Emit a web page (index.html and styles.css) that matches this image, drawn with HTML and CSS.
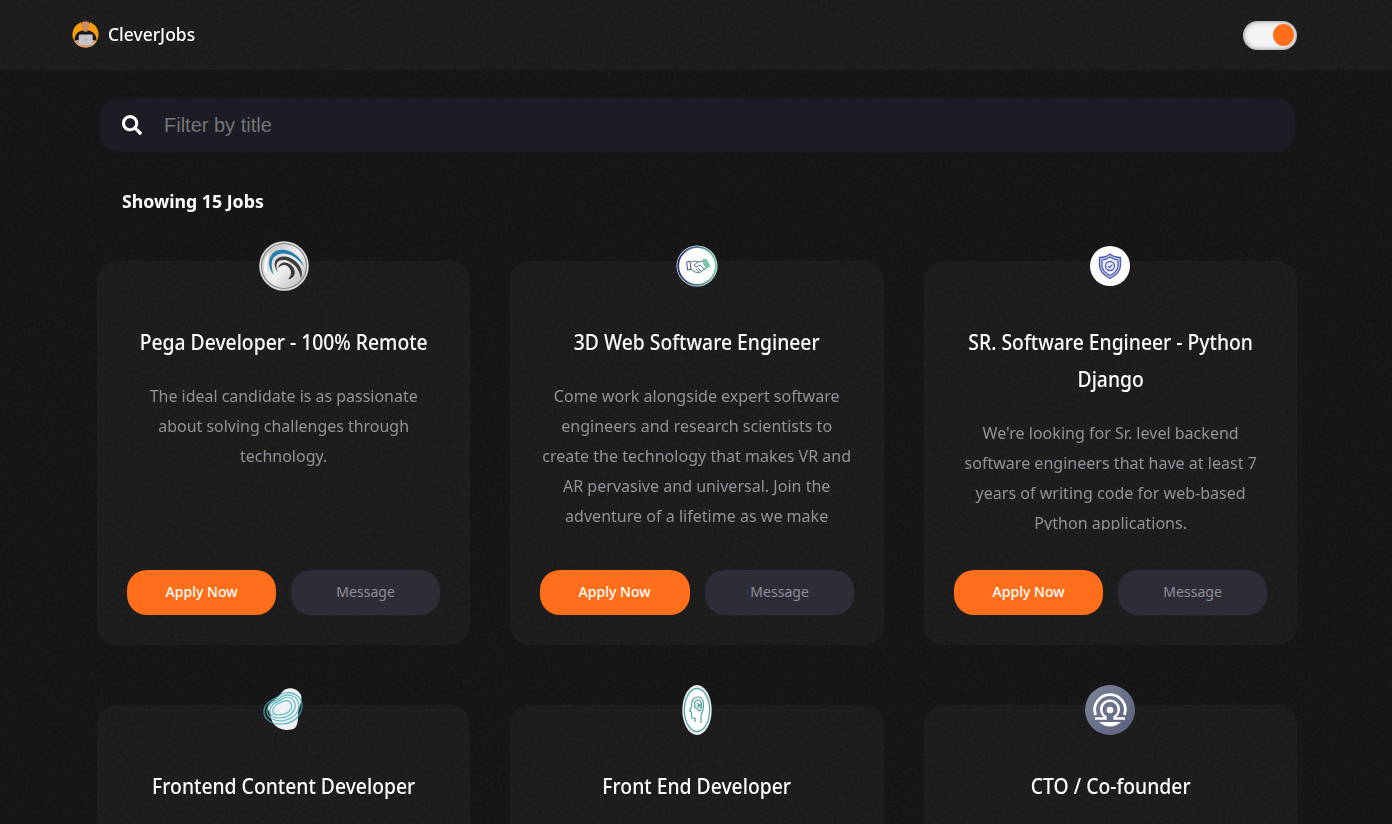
FILE: index.html
```
<!DOCTYPE html>
<html lang="en">
<head>
<meta charset="utf-8">
<title>CleverJobs</title>
<link rel="stylesheet" href="styles.css">
</head>
<body>
<header class="header">
  <div class="brand">
    <svg class="brand-logo" viewBox="0 0 28 31">
      <circle cx="14" cy="16.500" r="13.500" fill="#f99d0c"/>
      <path d="M2.500 23Q3 14.500 9 13L14 11.500L19 13Q25 14.500 25.500 23L22 26H6Z" fill="#16161b"/>
      <path d="M2 23L8 22V26H20V22L26 23Q22 30 14 30Q6 30 2 23Z" fill="#dc9c76"/>
      <path d="M11.500 9H16.500V13Q14 15 11.500 13Z" fill="#b9754f"/>
      <ellipse cx="14" cy="7" rx="3.800" ry="5" fill="#c98a64"/>
      <path d="M9.800 6Q8.500 0 14 0Q19.500 0 18.200 6L17 3H11Z" fill="#2b2020"/>
      <rect x="7" y="16.500" width="14.500" height="11" rx="1.500" fill="#c3c4c8"/>
      <circle cx="14.200" cy="22" r="1.700" fill="#b1b2b7"/>
    </svg>
    <span class="brand-name">CleverJobs</span>
  </div>
  <div class="toggle"><span class="toggle-knob"></span></div>
</header>
<main class="main">
  <label class="search">
    <svg class="search-icon" viewBox="0 0 512 512"><path fill="#fff" d="M505 442.700L405.300 343c-4.500-4.500-10.600-7-17-7H372c27.600-35.300 44-79.700 44-128C416 93.100 322.900 0 208 0S0 93.100 0 208s93.100 208 208 208c48.300 0 92.700-16.400 128-44v16.300c0 6.400 2.500 12.500 7 17l99.700 99.700c9.400 9.400 24.600 9.400 33.900 0l28.300-28.300c9.400-9.400 9.400-24.600.1-34zM208 336c-70.700 0-128-57.200-128-128 0-70.700 57.200-128 128-128 70.700 0 128 57.200 128 128 0 70.700-57.200 128-128 128z"/></svg>
    <input class="search-input" type="text" placeholder="Filter by title">
  </label>
  <h2 class="count">Showing 15 Jobs</h2>
  <section class="grid">
    <article class="card">
      <svg class="logo" viewBox="0 0 50 50">
        <defs><linearGradient id="sv" x1="0" y1="0" x2="1" y2="1"><stop offset="0" stop-color="#b4b4b4"/><stop offset=".5" stop-color="#f2f2f2"/><stop offset="1" stop-color="#b5b5b5"/></linearGradient></defs>
        <circle cx="25" cy="25" r="24.800" fill="#dadada"/>
        <circle cx="25" cy="25" r="22.500" fill="url(#sv)" stroke="#858585" stroke-width="1.100"/>
        <path d="M5.500 30Q4 17 11 11Q6 22 9 33Z" fill="#fff"/>
        <path d="M15 34C8 27 8 14 18 9.500C29 6 41 14 45 25.500C39 17 31 12.500 24 12.500C13 13 10 22 15 34Z" fill="#287ead"/>
        <path d="M19 31C12 22 17 14.500 27 15.500C37 17.500 46 28 42 38C41 29 35 22 28 19.500C19 17.500 15 22 19 31Z" fill="#3d3d3f"/>
        <path d="M19 27C21 20 28 20.500 32 24C38 29 37 37 29 38.500C33 34 33 29 29 25.500Q24 22 19 27Z" fill="#39393b"/>
      </svg>
      <div class="card-body">
        <h3 class="title">Pega Developer - 100% Remote</h3>
        <p class="desc">The ideal candidate is as passionate<br>about solving challenges through<br>technology.</p>
      </div>
      <div class="actions"><button class="btn btn-apply"><span>Apply Now</span></button><button class="btn btn-message"><span>Message</span></button></div>
    </article>
    <article class="card">
      <svg class="logo" viewBox="0 0 50 50">
        <defs><linearGradient id="rg"><stop offset="0" stop-color="#29306f"/><stop offset="1" stop-color="#6ec7a6"/></linearGradient></defs>
        <circle cx="25" cy="25" r="20.500" fill="#e4e8ee"/>
        <circle cx="25" cy="25" r="18.800" fill="#fff" stroke="url(#rg)" stroke-width="1.800"/>
        <g fill="none" stroke-linejoin="round" stroke-linecap="round" stroke-width=".9">
          <path d="M15 21L18 20L19 28L16 29Z" stroke="#2f3f75"/>
          <path d="M19 21L23 20L27 21L31 20L34 27L30 30L27 32L23 31L19 28M26 21L22 24L24 26L28 24L33 29M24 28L27 31M26 27L29 30" stroke="#45717f"/>
          <path d="M31 19L34 18L38 25L35 27Z" fill="#70c5a7" stroke="#70c5a7"/>
        </g>
      </svg>
      <div class="card-body">
        <h3 class="title">3D Web Software Engineer</h3>
        <p class="desc desc-wide">Come work alongside expert software<br>engineers and research scientists to<br>create the technology that makes VR and<br>AR pervasive and universal. Join the<br>adventure of a lifetime as we make</p>
      </div>
      <div class="actions"><button class="btn btn-apply"><span>Apply Now</span></button><button class="btn btn-message"><span>Message</span></button></div>
    </article>
    <article class="card">
      <svg class="logo" viewBox="0 0 50 50">
        <circle cx="25" cy="25" r="20" fill="#fff"/>
        <g fill="none" stroke="#525eb5" stroke-linejoin="round">
          <path d="M25 13Q29 16.500 35.500 16.500V24Q35.500 32 25 37.500Q14.500 32 14.500 24V16.500Q21 16.500 25 13Z" fill="#c5c9e8" stroke-width="1.400"/>
          <path d="M25 16Q28.500 18.500 33 19V24.500Q33 30.500 25 34.500Q17 30.500 17 24.500V19Q21.500 18.500 25 16Z" fill="#eef0fb" stroke-width="1.200"/>
          <circle cx="25" cy="25" r="4.500" stroke-width="1.300"/>
          <path d="M23 25L24.600 26.600L27.500 23.600" stroke-width="1.300"/>
        </g>
      </svg>
      <div class="card-body">
        <h3 class="title">SR. Software Engineer - Python<br>Django</h3>
        <p class="desc desc-wide">We're looking for Sr. level backend<br>software engineers that have at least 7<br>years of writing code for web-based<br>Python applications.</p>
      </div>
      <div class="actions"><button class="btn btn-apply"><span>Apply Now</span></button><button class="btn btn-message"><span>Message</span></button></div>
    </article>
    <article class="card">
      <svg class="logo" viewBox="0 0 50 50">
        <path d="M24 6C29 1 39 3 42 10C44 17 39 23 39 31C39 40 37 44 32 44.500C24 46 16 43 13 36L9 24Q8 19 14 16Q20 12 24 6Z" fill="#f0f3f4"/>
        <g fill="none" stroke="#43aebb" stroke-width="1.200" opacity=".85">
          <path d="M5 26C5 17 15 15 21 10C29 5 40 8 43 18C44 29 36 38 24 39C13 40 4 34 5 26Z"/>
          <path d="M8 25C9 18 17 16 23 11.500C31 7 40 13 40 20C40 31 30 35 23 36C14 36 7 32 8 25Z"/>
          <path d="M11 25C12 18 19 17 25 13C33 10 37 17 36 23C33 31 26 33 20 33C14 33 10 30 11 25Z"/>
          <path d="M14 25C15 20 20 18 25 16C31 14.500 34 19 32 24C29 29 24 30 19 30Q13 30 14 25Z"/>
        </g>
      </svg>
      <div class="card-body">
        <h3 class="title">Frontend Content Developer</h3>
      </div>
    </article>
    <article class="card">
      <svg class="logo" viewBox="0 0 50 50">
        <ellipse cx="25" cy="25" rx="14.700" ry="25" fill="#e9eeee"/>
        <ellipse cx="25" cy="25" rx="12.600" ry="21.500" fill="#fff" stroke="#5aa6a4" stroke-width="1.300"/>
        <g fill="none" stroke="#4f9f9d" stroke-width="1.200" stroke-linejoin="round">
          <path d="M23 37V33Q19 34 19.500 31V27L17.500 26L19.500 22C19 15 22 12 26 12C31 12 32 18 31.500 22Q31 27 29 30V38"/>
          <path d="M23 20Q21.500 17 24 16Q26 13.500 28 16Q30 18 29.500 22Q29 26 27 26Q26 23 24 23Q22 22 23 20ZM25 18L27 20L25 22M28 19V23"/>
        </g>
      </svg>
      <div class="card-body">
        <h3 class="title">Front End Developer</h3>
      </div>
    </article>
    <article class="card">
      <svg class="logo" viewBox="0 0 50 50">
        <defs><linearGradient id="sl" x1="0" y1="0" x2="1" y2="1"><stop offset="0" stop-color="#7c8599"/><stop offset="1" stop-color="#5a5f7c"/></linearGradient></defs>
        <circle cx="25" cy="25" r="25" fill="url(#sl)"/>
        <g fill="none" stroke="#fff">
          <path d="M10.600 30A15.300 15.300 0 1 1 39.400 30" stroke-width="2.800"/>
          <path d="M10 33.500H20.500V32A8.800 8.800 0 1 1 29.500 32V33.500H40" stroke-width="2.400"/>
        </g>
        <circle cx="25" cy="25" r="3.300" fill="#fff"/>
        <path d="M14 37H36Q31 41.500 25 41.500Q19 41.500 14 37Z" fill="#fff"/>
      </svg>
      <div class="card-body">
        <h3 class="title">CTO / Co-founder</h3>
      </div>
    </article>
  </section>
</main>
<svg class="grain"><filter id="grain"><feTurbulence type="fractalNoise" baseFrequency=".35" numOctaves="3"/><feColorMatrix values="0 0 0 0 0  0 0 0 0 0  0 0 0 0 0  1.200 0 0 0 -.45"/></filter><rect width="100%" height="100%" filter="url(#grain)"/></svg>
</body>
</html>
```
FILE: styles.css
```
* { box-sizing: border-box; }
body {
  margin: 0;
  height: 824px;
  overflow: hidden;
  background: #181818;
  color: #fff;
  font-family: "Noto Sans", sans-serif;
}
.header {
  height: 70px;
  padding: 0 95px 0 72px;
  display: flex;
  align-items: center;
  justify-content: space-between;
  background: rgba(255, 255, 255, .032);
}
.brand { display: flex; align-items: center; gap: 9px; margin-bottom: 3px; }
.brand-logo { width: 27px; height: 31px; }
.brand-name {
  font-size: 18px;
  font-weight: 500;
  line-height: 30px;
  transform: scaleX(.97);
  transform-origin: left;
}
.toggle {
  width: 54px;
  height: 29px;
  padding: 3px;
  display: flex;
  justify-content: flex-end;
  border-radius: 15px;
  background: #f3f4f6;
  box-shadow: inset 0 0 5px rgba(0, 0, 0, .5);
}
.toggle-knob { width: 21px; height: 22px; border-radius: 50%; background: #ff6f1b; }
.main { width: 1200px; margin-left: 97px; padding-top: 28px; }
.search {
  height: 54px;
  margin: 0 2px 0 3px;
  padding: 0 22px;
  display: flex;
  align-items: center;
  gap: 22px;
  border-radius: 20px;
  background: #1c1c25;
  box-shadow: 0 0 4px rgba(28, 28, 37, .8);
}
.search-icon { width: 20px; height: 20px; }
.search-input {
  flex: 1;
  padding: 0;
  border: 0;
  outline: 0;
  background: none;
  color: #fff;
  font: 20px "Liberation Sans", Arial, sans-serif;
}
.search-input::placeholder { color: #757575; }
.count {
  margin: 34px 0 0 25px;
  font-size: 18px;
  line-height: 30px;
  transform: scaleX(.985);
  transform-origin: left;
}
.grid {
  margin-top: 45px;
  display: grid;
  grid-template-columns: repeat(3, 1fr);
  grid-auto-rows: 384px;
  gap: 60px 40px;
}
.card {
  min-width: 0;
  padding: 0 30px 30px;
  display: flex;
  flex-direction: column;
  align-items: center;
  border-radius: 20px;
  background: rgba(255, 255, 255, .032);
}
.logo { width: 50px; height: 50px; margin-top: -20px; flex: none; }
.card-body { flex: 1; min-height: 0; margin-top: 33px; overflow: hidden; width: 100%; text-align: center; white-space: nowrap; }
.title {
  display: flow-root;
  margin: 0 -10px;
  font-size: 21px;
  font-weight: 500;
  line-height: 37px;
  transform: scaleX(.92);
}
.desc {
  margin: 20px -10px 0;
  color: #93929a;
  font-size: 17px;
  line-height: 30px;
  transform: scaleX(.938);
}
.desc-wide { transform: scaleX(.944); }
.actions { width: 100%; margin-top: 40px; display: flex; gap: 15px; }
.btn {
  flex: 1;
  height: 45px;
  padding: 0;
  border: 0;
  border-radius: 20px;
  font: 500 15px/45px "Noto Sans", sans-serif;
}
.btn span { display: block; transform: translateY(-1px) scaleX(.935); }
.btn-apply { background: #ff6f1b; color: #fff; }
.btn-message { background: #2e2d37; color: #8f8e97; font-weight: 400; }
.grain { position: absolute; inset: 0; width: 100%; height: 100%; opacity: .35; pointer-events: none; z-index: -1; }
```
